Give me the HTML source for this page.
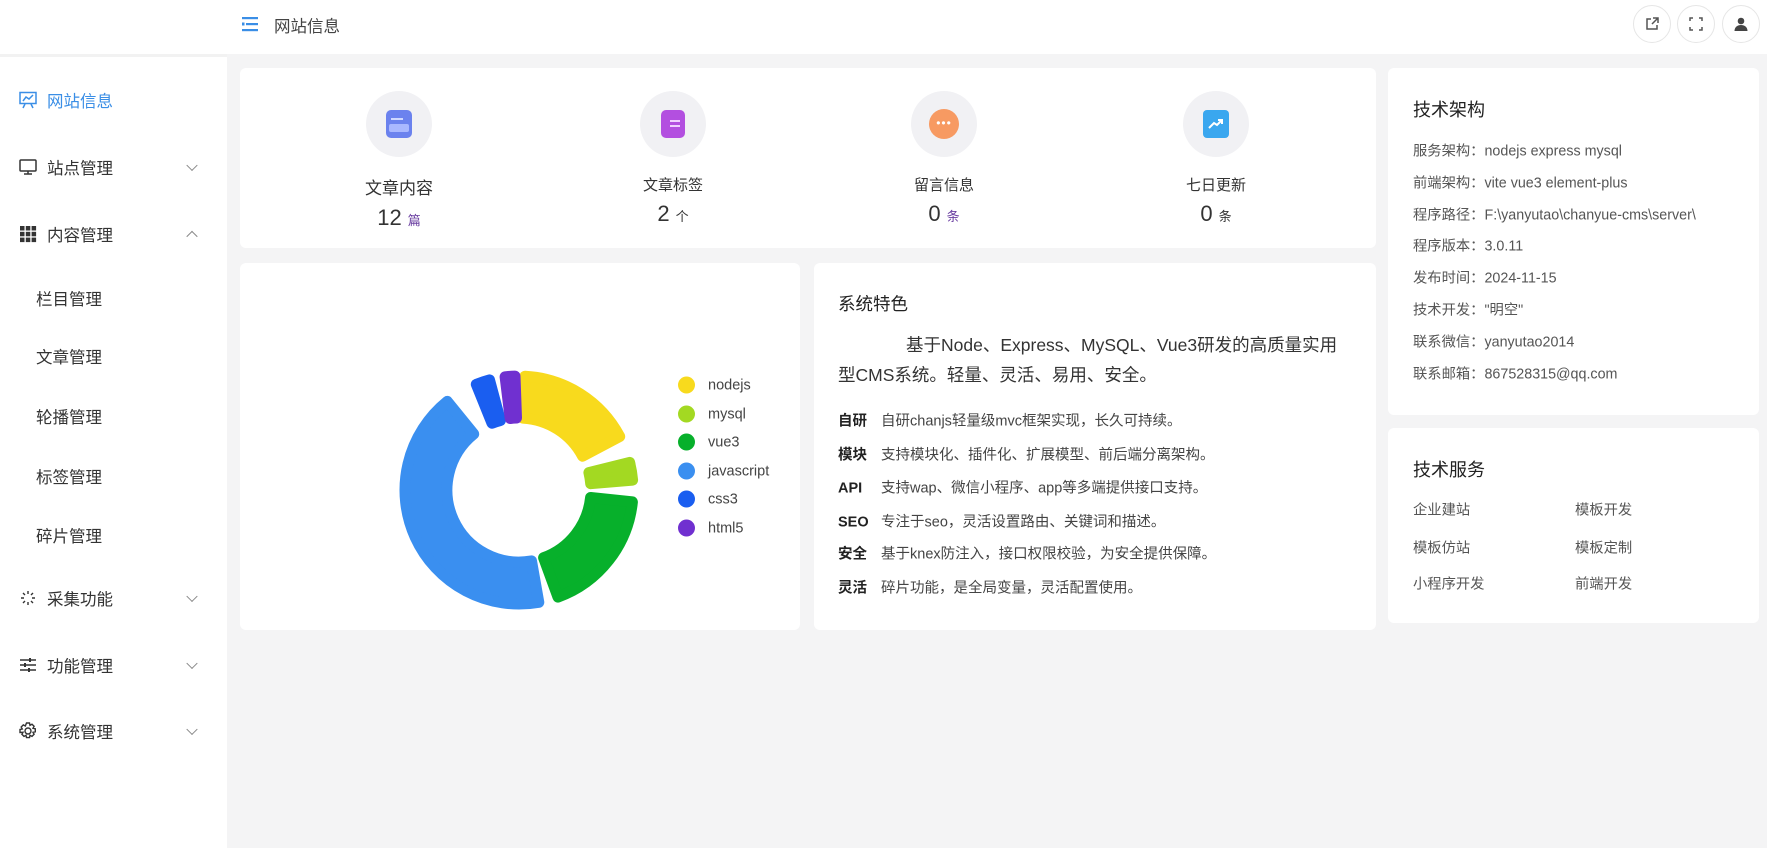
<!DOCTYPE html>
<html><head><meta charset="utf-8">
<style>
*{margin:0;padding:0;box-sizing:border-box}
body{width:1767px;height:848px;overflow:hidden;background:#f4f4f5;font-family:"Liberation Sans","Noto Sans CJK SC",sans-serif;color:#333;position:relative}
.abs{position:absolute}
.side{left:0;top:0;width:227px;height:848px;background:#fff}
.si{position:absolute;left:18px;font-size:16.5px;color:#333;display:flex;align-items:center;height:30px;transform:translateY(-50%)}
.si svg{margin-right:9px}
.chev{position:absolute;left:188px;width:8px;height:8px;border-right:1.3px solid #888;border-bottom:1.3px solid #888;transform:translateY(-70%) rotate(45deg)}
.chev.up{transform:translateY(-20%) rotate(-135deg)}
.sub{position:absolute;left:36px;font-size:16.5px;color:#333;transform:translateY(-50%)}
.head{left:227px;top:0;width:1540px;height:54px;background:#fff}
.card{position:absolute;background:#fff;border-radius:6px}
.hbtn{position:absolute;width:38px;height:38px;border-radius:50%;border:1px solid #e6e6e6;background:#fff;top:5px;display:flex;align-items:center;justify-content:center}
.stat{position:absolute;width:200px;text-align:center;transform:translateX(-50%)}
.ic{width:66px;height:66px;border-radius:50%;background:#f1f1f4;margin:0 auto;display:flex;align-items:center;justify-content:center}
.lab{font-size:15px;color:#333;margin-top:17px}
.num{font-size:22px;color:#333;margin-top:6px}
.num small{font-size:13px;color:#6a3ea1;margin-left:6px}
.leg{position:absolute;left:678px;font-size:14.5px;color:#444;display:flex;align-items:center;transform:translateY(-50%)}
.leg i{width:17px;height:17px;border-radius:50%;margin-right:13px;display:inline-block}
.ft{position:absolute;left:838px;font-size:14.5px;color:#444;transform:translateY(-50%);white-space:nowrap}
.ft b{color:#222;display:inline-block;width:43px}
.row{position:absolute;left:1413px;font-size:14.3px;color:#555;transform:translateY(-50%);white-space:nowrap}
</style></head><body>
<div class="abs side"></div>
<div class="abs" style="left:0;top:54px;width:227px;height:3px;background:#f2f2f2"></div>
<div class="abs head"></div>

<div class="si" style="top:100px;color:#3a8ee6"><svg width="20" height="20" viewBox="0 0 20 20" fill="none" stroke="#3a8ee6" stroke-width="1.5"><rect x="2" y="2.5" width="16" height="11"/><path d="M5 11l3-4 3 2 4-4M7 14l-2 4M13 14l2 4"/></svg>网站信息</div>
<div class="si" style="top:167px"><svg width="20" height="20" viewBox="0 0 20 20" fill="none" stroke="#333" stroke-width="1.5"><rect x="2" y="3" width="16" height="11" rx="1"/><path d="M10 14v3M6 17h8"/></svg>站点管理</div><div class="chev" style="top:167px"></div>
<div class="si" style="top:234px"><svg width="20" height="20" viewBox="0 0 20 20" fill="#333"><rect x="2" y="2" width="4.5" height="4.5"/><rect x="7.8" y="2" width="4.5" height="4.5"/><rect x="13.6" y="2" width="4.5" height="4.5"/><rect x="2" y="7.8" width="4.5" height="4.5"/><rect x="7.8" y="7.8" width="4.5" height="4.5"/><rect x="13.6" y="7.8" width="4.5" height="4.5"/><rect x="2" y="13.6" width="4.5" height="4.5"/><rect x="7.8" y="13.6" width="4.5" height="4.5"/><rect x="13.6" y="13.6" width="4.5" height="4.5"/></svg>内容管理</div><div class="chev up" style="top:234px"></div>
<div class="sub" style="top:298px">栏目管理</div>
<div class="sub" style="top:356px">文章管理</div>
<div class="sub" style="top:416px">轮播管理</div>
<div class="sub" style="top:476px">标签管理</div>
<div class="sub" style="top:535px">碎片管理</div>
<div class="si" style="top:598px"><svg width="20" height="20" viewBox="0 0 20 20" fill="none" stroke="#333" stroke-width="1.4"><path d="M10 3v3M10 14v3M3 10h3M14 10h3M5 5l2 2M13 13l2 2M15 5l-2 2M7 13l-2 2"/></svg>采集功能</div><div class="chev" style="top:598px"></div>
<div class="si" style="top:665px"><svg width="20" height="20" viewBox="0 0 20 20" fill="none" stroke="#333" stroke-width="1.5"><path d="M2 5h16M2 10h16M2 15h16"/><path d="M12 3v4M7 8v4M11 13v4" stroke-width="2"/></svg>功能管理</div><div class="chev" style="top:665px"></div>
<div class="si" style="top:731px"><svg width="20" height="20" viewBox="0 0 20 20" fill="none" stroke="#333" stroke-width="1.4"><circle cx="10" cy="10" r="3"/><path d="M8.5 2h3l.5 2.3 2-1.1 2.1 2.1-1.1 2 2.3.5v3l-2.3.5 1.1 2-2.1 2.1-2-1.1-.5 2.3h-3l-.5-2.3-2 1.1-2.1-2.1 1.1-2L2 11.5v-3l2.3-.5-1.1-2 2.1-2.1 2 1.1z"/></svg>系统管理</div><div class="chev" style="top:731px"></div>

<svg class="abs" style="left:242px;top:16px" width="16" height="16" viewBox="0 0 16 16" fill="#3a8ee6"><rect x="0" y="1" width="16" height="2.2"/><rect x="4" y="7" width="12" height="2.2"/><rect x="0" y="13" width="16" height="2.2"/><rect x="0" y="6.5" width="2.5" height="3"/></svg>
<div class="abs" style="left:274px;top:13px;font-size:16.5px;color:#444">网站信息</div>
<div class="hbtn" style="left:1633px"><svg width="16" height="16" viewBox="0 0 16 16" fill="none" stroke="#555" stroke-width="1.5"><path d="M7 3H3v10h10V9M9 2h5v5M14 2L8 8"/></svg></div>
<div class="hbtn" style="left:1677px"><svg width="16" height="16" viewBox="0 0 16 16" fill="none" stroke="#555" stroke-width="1.5"><path d="M2 5V2h3M11 2h3v3M14 11v3h-3M5 14H2v-3"/></svg></div>
<div class="hbtn" style="left:1722px"><svg width="16" height="16" viewBox="0 0 16 16" fill="#444"><circle cx="8" cy="5" r="3.3"/><path d="M1.5 15c0-4 3-6 6.5-6s6.5 2 6.5 6z"/></svg></div>

<div class="card" style="left:240px;top:68px;width:1136px;height:180px"></div>
<div class="stat" style="left:399px;top:91px"><div class="ic"><div style="width:26px;height:28px;background:#6b82ee;border-radius:5px;position:relative"><div style="position:absolute;left:5px;top:8px;width:12px;height:2px;background:#cfd8ff"></div><div style="position:absolute;left:3px;top:14px;width:20px;height:8px;background:#a9b8ff;border-radius:2px"></div></div></div><div class="lab" style="font-size:17px">文章内容</div><div class="num">12<small>篇</small></div></div>
<div class="stat" style="left:673px;top:91px"><div class="ic"><div style="width:24px;height:28px;background:#b34fe0;border-radius:5px;position:relative"><div style="position:absolute;left:9px;top:10px;width:10px;height:2px;background:#f0d0ff"></div><div style="position:absolute;left:9px;top:15px;width:10px;height:2px;background:#f0d0ff"></div></div></div><div class="lab">文章标签</div><div class="num">2<small style="color:#333">个</small></div></div>
<div class="stat" style="left:944px;top:91px"><div class="ic"><div style="width:30px;height:30px;background:#f79a62;border-radius:50%;color:#fff;font-size:12px;line-height:28px;letter-spacing:1px">•••</div></div><div class="lab">留言信息</div><div class="num">0<small>条</small></div></div>
<div class="stat" style="left:1216px;top:91px"><div class="ic"><div style="width:26px;height:28px;background:#3aa7ef;border-radius:4px;display:flex;align-items:center;justify-content:center"><svg width="16" height="12" viewBox="0 0 16 12" fill="none" stroke="#fff" stroke-width="2"><path d="M1 10l5-5 3 2 5-5M10 2h4v4"/></svg></div></div><div class="lab">七日更新</div><div class="num">0<small style="color:#333">条</small></div></div>

<div class="card" style="left:240px;top:263px;width:560px;height:367px"></div>
<svg class="abs" id="donut" style="left:0;top:0" width="800" height="640"></svg>
<div class="leg" style="top:385px"><i style="background:#f8da1d"></i>nodejs</div>
<div class="leg" style="top:414px"><i style="background:#a3d922"></i>mysql</div>
<div class="leg" style="top:442px"><i style="background:#07b02b"></i>vue3</div>
<div class="leg" style="top:471px"><i style="background:#3a8ff0"></i>javascript</div>
<div class="leg" style="top:499px"><i style="background:#1a5ef0"></i>css3</div>
<div class="leg" style="top:528px"><i style="background:#7030d0"></i>html5</div>

<div class="card" style="left:814px;top:263px;width:562px;height:367px"></div>
<div class="abs" style="left:838px;top:291px;font-size:17.5px;color:#222">系统特色</div>
<div class="abs" style="left:838px;top:330px;width:516px;font-size:17.5px;color:#333;line-height:30px;text-indent:68px">基于Node、Express、MySQL、Vue3研发的高质量实用<br>型CMS系统。轻量、灵活、易用、安全。</div>
<div class="ft" style="top:420px"><b>自研</b>自研chanjs轻量级mvc框架实现，长久可持续。</div>
<div class="ft" style="top:454px"><b>模块</b>支持模块化、插件化、扩展模型、前后端分离架构。</div>
<div class="ft" style="top:487px"><b>API</b>支持wap、微信小程序、app等多端提供接口支持。</div>
<div class="ft" style="top:521px"><b>SEO</b>专注于seo，灵活设置路由、关键词和描述。</div>
<div class="ft" style="top:553px"><b>安全</b>基于knex防注入，接口权限校验，为安全提供保障。</div>
<div class="ft" style="top:587px"><b>灵活</b>碎片功能，是全局变量，灵活配置使用。</div>

<div class="card" style="left:1388px;top:68px;width:371px;height:347px"></div>
<div class="abs" style="left:1413px;top:96px;font-size:18px;color:#222">技术架构</div>
<div class="row" style="top:150px">服务架构：nodejs express mysql</div>
<div class="row" style="top:182px">前端架构：vite vue3 element-plus</div>
<div class="row" style="top:214px">程序路径：F:\yanyutao\chanyue-cms\server\</div>
<div class="row" style="top:245px">程序版本：3.0.11</div>
<div class="row" style="top:277px">发布时间：2024-11-15</div>
<div class="row" style="top:309px">技术开发："明空"</div>
<div class="row" style="top:341px">联系微信：yanyutao2014</div>
<div class="row" style="top:373px">联系邮箱：867528315@qq.com</div>

<div class="card" style="left:1388px;top:428px;width:371px;height:195px"></div>
<div class="abs" style="left:1413px;top:456px;font-size:18px;color:#222">技术服务</div>
<div class="row" style="top:509px">企业建站</div><div class="row" style="top:509px;left:1575px">模板开发</div>
<div class="row" style="top:547px">模板仿站</div><div class="row" style="top:547px;left:1575px">模板定制</div>
<div class="row" style="top:583px">小程序开发</div><div class="row" style="top:583px;left:1575px">前端开发</div>

<script>
(function(){
var cx=519,cy=490,R=114,r=72,s=document.getElementById('donut'),h='';
var segs=[[3,62,'#f8da1d'],[76,85,'#a3d922'],[96,160,'#07b02b'],[170,321,'#3a8ff0'],[338,345,'#1a5ef0'],[353,358,'#7030d0']];
function p(a,rad){a=(a-90)*Math.PI/180;return (cx+rad*Math.cos(a)).toFixed(1)+' '+(cy+rad*Math.sin(a)).toFixed(1);}
segs.forEach(function(g){var l=(g[1]-g[0])>180?1:0;
h+='<path d="M'+p(g[0],R)+' A'+R+' '+R+' 0 '+l+' 1 '+p(g[1],R)+' L'+p(g[1],r)+' A'+r+' '+r+' 0 '+l+' 0 '+p(g[0],r)+' Z" fill="'+g[2]+'" stroke="'+g[2]+'" stroke-width="11" stroke-linejoin="round"/>';});
s.innerHTML=h;})();
</script>
</body></html>
